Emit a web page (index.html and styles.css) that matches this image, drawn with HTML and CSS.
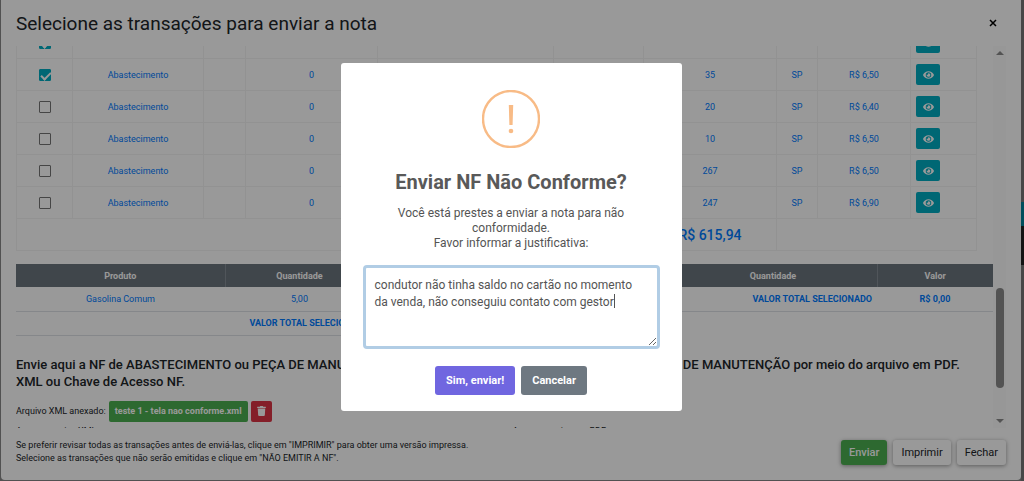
FILE: index.html
```html
<!DOCTYPE html>
<html lang="pt-BR">
<head>
  <meta charset="UTF-8">
  <title>Enviar nota</title>
  <link rel="stylesheet" href="styles.css">
</head>
<body>
  <svg width="0" height="0" class="sprite">
    <symbol id="eye" viewBox="0 0 576 512">
      <path d="M572.5 241.400C518.300 135.600 410.900 64 288 64S57.700 135.600 3.500 241.400a32.400 32.400 0 0 0 0 29.200C57.700 376.400 165.100 448 288 448s230.300-71.600 284.500-177.400a32.400 32.400 0 0 0 0-29.200zM288 400a144 144 0 1 1 144-144 143.900 143.900 0 0 1-144 144zm0-240a95.300 95.300 0 0 0-25.300 3.800 47.900 47.900 0 0 1-66.900 66.900A95.800 95.800 0 1 0 288 160z"/>
    </symbol>
    <symbol id="trash" viewBox="0 0 448 512">
      <path d="M432 32H312l-9.400-18.700A24 24 0 0 0 281.100 0H166.800a23.700 23.700 0 0 0-21.400 13.300L136 32H16A16 16 0 0 0 0 48v32a16 16 0 0 0 16 16h416a16 16 0 0 0 16-16V48a16 16 0 0 0-16-16zM53.200 467a48 48 0 0 0 47.900 45h245.800a48 48 0 0 0 47.900-45L416 128H32z"/>
    </symbol>
  </svg>

  <div class="modal">
    <div class="modal-header">
      <h5 class="modal-title">Selecione as transações para enviar a nota</h5>
      <button type="button" class="close" aria-label="Fechar janela">
        <svg viewBox="0 0 8 8"><path d="M1 1l6 6M7 1L1 7"/></svg>
      </button>
    </div>

    <div class="modal-body">
      <div class="content">
        <table class="transacoes">
          <colgroup>
            <col class="c-check"><col class="c-tipo"><col class="c-a"><col class="c-b"><col class="c-c">
            <col class="c-d"><col class="c-e"><col class="c-uf"><col class="c-preco"><col class="c-acao">
          </colgroup>
          <tbody id="linhas"></tbody>
          <tfoot>
            <tr>
              <td colspan="6"></td>
              <td class="total">R$ 615,94</td>
              <td colspan="3"></td>
            </tr>
          </tfoot>
        </table>

        <div class="resumo">
          <table class="produtos">
            <thead>
              <tr><th class="p-nome">Produto</th><th class="p-qtd">Quantidade</th><th>Valor</th></tr>
            </thead>
            <tbody>
              <tr><td>Gasolina Comum</td><td>5,00</td><td>R$ 0,00</td></tr>
              <tr><td colspan="2" class="soma">VALOR TOTAL SELECIONADO</td><td class="soma-valor">R$ 0,00</td></tr>
            </tbody>
          </table>
          <table class="produtos">
            <thead>
              <tr><th>Serviço</th><th class="s-qtd">Quantidade</th><th class="s-valor">Valor</th></tr>
            </thead>
            <tbody>
              <tr><td colspan="2" class="soma">VALOR TOTAL SELECIONADO</td><td class="soma-valor">R$ 0,00</td></tr>
            </tbody>
          </table>
        </div>

        <h6 class="aviso">Envie aqui a NF de ABASTECIMENTO ou PEÇA DE MANUTENÇÃO por meio do arquivo em XML e a NF de SERVIÇO DE MANUTENÇÃO por meio do arquivo em PDF.<br>XML ou Chave de Acesso NF.</h6>

        <div class="anexo">
          <span>Arquivo XML anexado:</span>
          <button type="button" class="btn-arquivo">teste 1 - tela nao conforme.xml</button>
          <button type="button" class="btn-excluir" aria-label="Excluir arquivo"><svg><use href="#trash"/></svg></button>
        </div>

        <div class="arquivos">
          <span>Anexar arquivo XML:</span>
          <span>Anexar arquivo em PDF:</span>
        </div>
      </div>
      <div class="scrollbar">
        <span class="seta cima"></span>
        <span class="polegar"></span>
        <span class="seta baixo"></span>
      </div>
    </div>

    <div class="modal-footer">
      <p>Se preferir revisar todas as transações antes de enviá-las, clique em "IMPRIMIR" para obter uma versão impressa.<br>
        Selecione as transações que não serão emitidas e clique em "NÃO EMITIR A NF".</p>
      <div class="acoes">
        <button type="button" class="btn enviar">Enviar</button>
        <button type="button" class="btn">Imprimir</button>
        <button type="button" class="btn">Fechar</button>
      </div>
    </div>
  </div>

  <div class="overlay">
    <div class="alerta" role="dialog" aria-labelledby="alerta-titulo">
      <div class="icone"><svg viewBox="0 0 58 58"><circle cx="29" cy="29" r="28"/><path d="M26.800 15h4.400l-.6 20h-3.200z"/><circle class="ponto" cx="29" cy="41" r="2.300"/></svg></div>
      <h2 id="alerta-titulo">Enviar NF Não Conforme?</h2>
      <label for="justificativa">Você está prestes a enviar a nota para não conformidade.<br>Favor informar a justificativa:</label>
      <div class="campo">
        <textarea id="justificativa" spellcheck="false">condutor não tinha saldo no cartão no momento da venda, não conseguiu contato com gestor</textarea>
        <span class="cursor"></span>
      </div>
      <div class="alerta-acoes">
        <button type="button" class="confirmar">Sim, enviar!</button>
        <button type="button" class="cancelar">Cancelar</button>
      </div>
    </div>
  </div>

  <script>
    const linhas = [
      { km: "", uf: "", preco: "", marcada: true },
      { km: "35", uf: "SP", preco: "R$ 6,50", marcada: true },
      { km: "20", uf: "SP", preco: "R$ 6,40" },
      { km: "10", uf: "SP", preco: "R$ 6,50" },
      { km: "267", uf: "SP", preco: "R$ 6,50" },
      { km: "247", uf: "SP", preco: "R$ 6,90" }
    ];

    document.getElementById("linhas").innerHTML = linhas.map(l => `
      <tr>
        <td><input type="checkbox" aria-label="Selecionar transação" ${l.marcada ? "checked" : ""}></td>
        <td>${l.km && "Abastecimento"}</td>
        <td></td>
        <td>${l.km && "0"}</td>
        <td></td>
        <td></td>
        <td>${l.km}</td>
        <td>${l.uf}</td>
        <td>${l.preco}</td>
        <td class="acao"><button type="button" class="ver" aria-label="Ver transação"><svg><use href="#eye"/></svg></button></td>
      </tr>`).join("");
  </script>
</body>
</html>
```

FILE: styles.css
```css
* {
  box-sizing: border-box;
}

body {
  margin: 0;
  height: 100vh;
  padding: 0 3px 1px 1px;
  overflow: hidden;
  background:
    linear-gradient(#777 42%, #00829a 42%, #00829a 47%, #222 47%, #222 55%, #777 55%) right / 3px 100% no-repeat,
    #888;
  font-family: Roboto, sans-serif;
  color: #212529;
}

button {
  font-family: inherit;
  border: none;
  cursor: pointer;
}

.sprite {
  position: absolute;
}

.modal {
  display: flex;
  flex-direction: column;
  height: 100%;
  background: #fff;
  border-radius: 0 0 4px 4px;
}

.modal-header {
  display: flex;
  justify-content: space-between;
  align-items: center;
  height: 46px;
  flex: none;
  padding: 0 22px 0 15px;
}

.modal-title {
  margin: 0;
  font-size: 19px;
  font-weight: 400;
}

.close {
  display: flex;
  padding: 2px;
  background: none;
}

.close svg {
  width: 8px;
  height: 8px;
  stroke: #000;
  stroke-width: 1.5;
}

.modal-body {
  display: flex;
  flex: 1;
  min-height: 0;
  padding: 0 15px;
}

.content {
  flex: 1;
  min-width: 0;
  overflow: hidden;
}

/* lista de transações */
table {
  border-collapse: collapse;
  table-layout: fixed;
}

.transacoes {
  width: calc(100% - 16px);
  margin-top: -20px;
  color: #007bff;
  font-size: 9px;
  text-align: center;
}

.transacoes td {
  height: 32px;
  padding: 0 5px;
  border: 1px solid #f4f4f4;
}

.c-check { width: 56px; }
.c-tipo { width: 131px; }
.c-a { width: 42px; }
.c-b { width: 132px; }
.c-c { width: 176px; }
.c-d { width: 90px; }
.c-uf { width: 41px; }
.c-preco { width: 93px; }
.c-acao { width: 66px; }

.transacoes .total {
  font-size: 14px;
  font-weight: 500;
}

.transacoes .acao {
  text-align: left;
}

.transacoes input {
  appearance: none;
  display: block;
  width: 12px;
  height: 12px;
  margin: 0 auto;
  border: 1px solid #757575;
  border-radius: 1px;
}

.transacoes input:checked {
  border-color: #00acc1;
  background: #00acc1;
}

.transacoes input:checked::after {
  content: "";
  display: block;
  width: 8px;
  height: 4px;
  margin: 2px 1px;
  border: solid #fff;
  border-width: 0 0 2px 2px;
  transform: rotate(-45deg);
}

.ver {
  display: flex;
  align-items: center;
  justify-content: center;
  width: 24px;
  height: 21px;
  padding: 0;
  border-radius: 2px;
  background: #00acc1;
}

.ver svg {
  width: 11px;
  height: 10px;
  fill: #fff;
}

.resumo {
  display: flex;
  align-items: flex-start;
  margin-top: 13px;
}

.produtos {
  flex: 1;
  width: 50%;
  color: #007bff;
  font-size: 9px;
  text-align: center;
}

.produtos th {
  height: 23px;
  padding: 0;
  border-right: 1px solid #868e96;
  background: #6c757d;
  color: #fff;
  font-weight: 700;
}

.produtos th:last-child {
  border-right: none;
}

.produtos td {
  height: 24px;
  padding: 0 5px;
  border-bottom: 1px solid #dee2e6;
}

.p-nome { width: 209px; }
.p-qtd { width: 149px; }
.s-qtd { width: 208px; }
.s-valor { width: 116px; }

.produtos .soma {
  text-align: right;
}

.produtos .soma,
.produtos .soma-valor {
  font-weight: 700;
}

.aviso {
  margin: 20px 0 11px;
  font-size: 13px;
  line-height: 17px;
  font-weight: 500;
}

.anexo {
  display: flex;
  align-items: center;
  gap: 3px;
  font-size: 9px;
}

.btn-arquivo,
.btn-excluir {
  height: 21px;
  border-radius: 2px;
  color: #fff;
}

.btn-arquivo {
  padding: 0 6px;
  background: #4caf50;
  font-size: 9px;
  font-weight: 700;
}

.btn-excluir {
  width: 21px;
  padding: 0;
  background: #dc3545;
}

.btn-excluir svg {
  display: block;
  width: 9px;
  height: 10px;
  margin: 0 auto;
  fill: #fff;
}

.arquivos {
  display: flex;
  gap: 16px;
  margin-top: 4px;
  font-size: 9px;
}

.arquivos span {
  flex: 1;
}

.scrollbar {
  display: flex;
  flex-direction: column;
  align-items: center;
  width: 13px;
  flex: none;
  padding: 5px 0;
  background: #fcfcfc;
}

.seta {
  border: 4px solid transparent;
}

.cima {
  border-top: none;
  border-bottom-color: #8b8b8b;
}

.baixo {
  border-bottom: none;
  border-top-color: #8b8b8b;
}

.polegar {
  width: 8px;
  height: 27%;
  margin: auto 0 31px;
  border-radius: 4px;
  background: #8b8b8b;
}

.modal-footer {
  display: flex;
  align-items: center;
  justify-content: space-between;
  height: 52px;
  flex: none;
  padding: 0 15px 4px;
}

.modal-footer p {
  margin: 0;
  font-size: 9px;
  line-height: 13px;
}

.acoes {
  display: flex;
  gap: 6px;
}

.btn {
  height: 25px;
  padding: 0 8px;
  border-radius: 3px;
  background: #fff;
  color: #212529;
  font-size: 11px;
  box-shadow: 0 1px 4px rgba(0, 0, 0, 0.4);
}

.enviar {
  background: #4caf50;
  color: #fff;
  font-weight: 500;
}

/* alerta de confirmação */
.overlay {
  position: fixed;
  inset: 0;
  display: flex;
  align-items: center;
  justify-content: center;
  padding: 0 2px 7px 0;
  background: rgba(0, 0, 0, 0.4);
}

.alerta {
  width: 341px;
  padding: 27px 22px 16px;
  border-radius: 3px;
  background: #fff;
  text-align: center;
}

.icone svg {
  display: block;
  width: 58px;
  height: 58px;
  margin: 0 auto;
  fill: none;
  stroke: #f8bb86;
  stroke-width: 2.4;
}

.icone path,
.icone .ponto {
  fill: #f8bb86;
  stroke: none;
}

.alerta h2 {
  margin: 22px 0 12px;
  color: #595959;
  font-size: 20px;
  line-height: 24px;
  font-weight: 700;
}

.alerta label {
  display: block;
  padding: 0 20px;
  color: #545454;
  font-size: 12px;
  line-height: 15px;
}

.campo {
  position: relative;
  margin: 14px 0 17px;
}

.campo textarea {
  display: block;
  width: 100%;
  height: 84px;
  padding: 9px;
  border: 3px solid #b1cde5;
  border-radius: 4px;
  outline: none;
  color: #545454;
  font-family: inherit;
  font-size: 12px;
  line-height: 17px;
}

/* cursor de texto no fim da segunda linha */
.cursor {
  position: absolute;
  top: 29px;
  left: 251px;
  width: 1px;
  height: 14px;
  background: #545454;
}

.alerta-acoes {
  display: flex;
  justify-content: center;
  gap: 6px;
}

.alerta-acoes button {
  height: 29px;
  padding: 0 11px;
  border-radius: 3px;
  color: #fff;
  font-size: 11px;
  font-weight: 700;
}

.confirmar {
  background: #7066e0;
}

.cancelar {
  background: #6e7881;
}
```
